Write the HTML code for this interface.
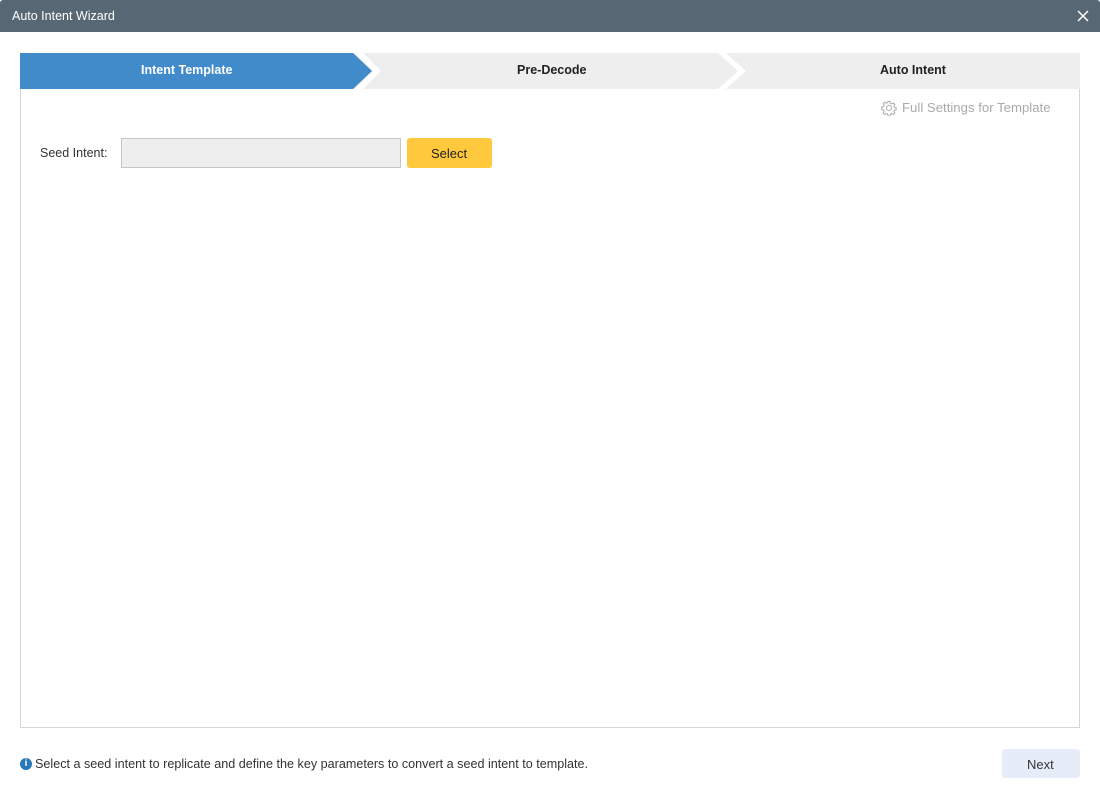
<!DOCTYPE html>
<html><head><style>
body{margin:0;width:1100px;height:798px;background:#fff;font-family:"Liberation Sans",sans-serif;position:relative;overflow:hidden}
.t{position:absolute;white-space:nowrap}
</style></head><body>
<div style="position:absolute;left:0;top:0;width:1100px;height:32px;background:#576874;border-radius:3px 3px 0 0"></div>
<div class="t" style="left:12px;top:9px;color:#fff;font-size:12.5px">Auto Intent Wizard</div>
<svg style="position:absolute;left:1077px;top:10px" width="12" height="12"><path d="M1 1L11 11M11 1L1 11" stroke="#fff" stroke-width="1.5"/></svg>
<div style="position:absolute;left:20px;top:88px;width:1058px;height:639px;border:1px solid #d6d6d6;border-top:none"></div>
<svg style="position:absolute;left:20px;top:53px" width="1060" height="36">
<rect x="0" y="0" width="1060" height="36" fill="#eeeeee"/>
<polygon points="0,0 333,0 352,18 333,36 0,36" fill="#428bca"/>
<polygon points="335,0 343,0 361,18 343,36 335,36 353,18" fill="#fff"/>
<polygon points="698,0 706,0 726,18 706,36 698,36 718,18" fill="#fff"/>
</svg>
<div class="t" style="left:141px;top:63px;color:#fff;font-weight:bold;font-size:12.5px">Intent Template</div>
<div class="t" style="left:517px;top:63px;color:#222;font-weight:bold;font-size:12.5px">Pre-Decode</div>
<div class="t" style="left:880px;top:63px;color:#222;font-weight:bold;font-size:12.5px">Auto Intent</div>
<svg style="position:absolute;left:881px;top:100px" width="16" height="16" viewBox="0 0 16 16"><circle cx="8" cy="8" r="2.5" fill="none" stroke="#aaa"/><path d="M7 1.5h2l.4 1.8 1.4.6 1.6-1 1.4 1.4-1 1.6.6 1.4 1.8.4v2l-1.8.4-.6 1.4 1 1.6-1.4 1.4-1.6-1-1.4.6-.4 1.8H7l-.4-1.8-1.4-.6-1.6 1-1.4-1.4 1-1.6-.6-1.4-1.8-.4V7l1.8-.4.6-1.4-1-1.6 1.4-1.4 1.6 1 1.4-.6z" fill="none" stroke="#aaa"/></svg>
<div class="t" style="left:902px;top:100px;color:#aaa;font-size:13.2px">Full Settings for Template</div>
<div class="t" style="left:40px;top:146px;color:#333;font-size:12.5px">Seed Intent:</div>
<div style="position:absolute;left:121px;top:138px;width:278px;height:28px;background:#efeeee;border:1px solid #c6c6c6"></div>
<div style="position:absolute;left:407px;top:138px;width:85px;height:30px;background:#ffc83d;border-radius:3px"></div>
<div class="t" style="left:431px;top:146px;color:#222;font-size:13px">Select</div>
<div style="position:absolute;left:20px;top:758px;width:12px;height:12px;border-radius:50%;background:#2878b8;color:#fff;font-size:10px;font-weight:bold;text-align:center;line-height:12px">i</div>
<div class="t" style="left:35px;top:757px;color:#333;font-size:12.6px">Select a seed intent to replicate and define the key parameters to convert a seed intent to template.</div>
<div style="position:absolute;left:1002px;top:749px;width:78px;height:29px;background:#e6edf8;border-radius:3px"></div>
<div class="t" style="left:1027px;top:757px;color:#333;font-size:13px">Next</div>
</body></html>
